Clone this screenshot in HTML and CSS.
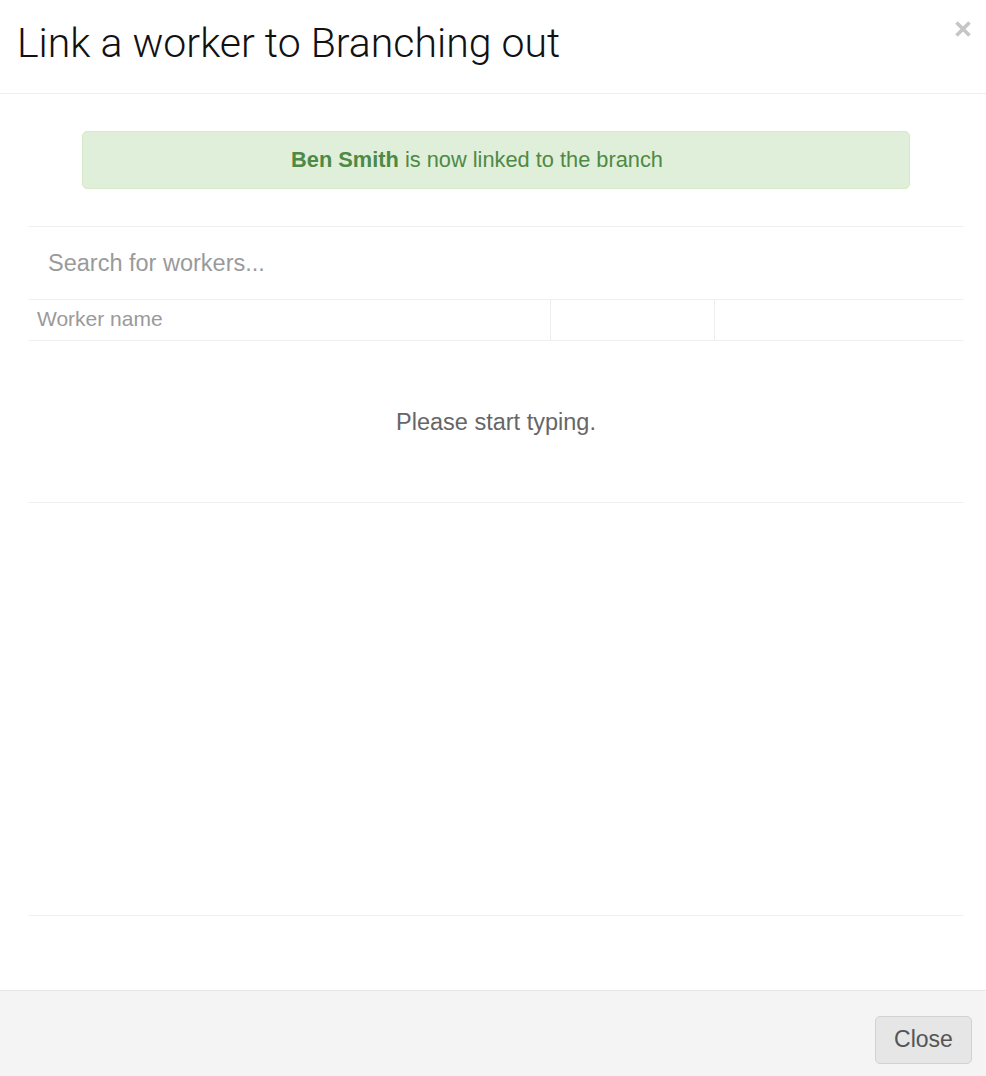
FILE: index.html
```html
<!DOCTYPE html>
<html lang="en">
<head>
    <meta charset="UTF-8">
    <meta name="viewport" content="width=device-width, initial-scale=1.0">
    <title>Link a worker</title>
    <link rel="stylesheet" href="styles.css">
</head>
<body>
    <div class="modal">
        <!-- Intestazione -->
        <div class="modal-header">
            <h1 class="modal-title">Link a worker to Branching out</h1>
            <button class="close" type="button" aria-label="Close">
                <svg width="18" height="18" viewBox="0 0 18 18">
                    <path d="M2.5 2.5 L15.5 15.5 M15.5 2.5 L2.5 15.5" stroke="#c6c6c6" stroke-width="3.6" fill="none"/>
                </svg>
            </button>
        </div>

        <div class="modal-body">
            <div class="alert-success"><strong>Ben Smith</strong> is now linked to the branch</div>

            <div class="search">
                <input type="text" class="search-input" placeholder="Search for workers...">
            </div>

            <table class="workers">
                <thead>
                    <tr>
                        <th class="col-name">Worker name</th>
                        <th class="col-mid"></th>
                        <th class="col-last"></th>
                    </tr>
                </thead>
            </table>

            <div class="empty">Please start typing.</div>

            <!-- Risultati della ricerca -->
            <div class="results"></div>
        </div>

        <div class="modal-footer">
            <button class="btn-close" type="button">Close</button>
        </div>
    </div>
</body>
</html>
```

FILE: styles.css
```css
body {
    margin: 0;
    background-color: #fff;
    font-family: "Liberation Sans", Arial, Helvetica, sans-serif;
    color: #333;
}

.modal {
    width: 986px;
    height: 1076px;
    display: flex;
    flex-direction: column;
}

.modal-header {
    position: relative;
    padding: 20px 17px 26px;
    border-bottom: 1px solid #eeeeee;
}

.modal-title {
    margin: 0;
    font-family: Roboto, "Liberation Sans", sans-serif;
    font-weight: 300;
    font-size: 41px;
    line-height: 47px;
    color: #111;
}

.close {
    position: absolute;
    top: 20px;
    right: 14px;
    width: 18px;
    height: 18px;
    padding: 0;
    border: none;
    background: none;
    cursor: pointer;
}

.close svg {
    display: block;
}

.modal-body {
    flex: 1;
    padding: 37px 22px 0 28px;
}

.alert-success {
    margin: 0 54px 37px;
    padding: 16px 54px 16px 16px;
    border: 1px solid #d6e9c6;
    border-radius: 5px;
    background-color: #e0efd9;
    color: #4f8946;
    font-size: 21.8px;
    line-height: 24px;
    text-align: center;
}

.search {
    border-top: 1px solid #f0f0f0;
}

.search-input {
    display: block;
    width: 100%;
    height: 72px;
    box-sizing: border-box;
    padding: 0 20px;
    border: none;
    outline: none;
    font-family: inherit;
    font-size: 23.5px;
    color: #555;
    background: transparent;
}

.search-input::placeholder {
    color: #9a9a9a;
}

.workers {
    width: 100%;
    border-collapse: collapse;
    table-layout: fixed;
}

.workers th {
    padding: 0 9px 2px;
    height: 38px;
    border-top: 1px solid #f0f0f0;
    border-bottom: 1px solid #f0f0f0;
    font-size: 21px;
    font-weight: normal;
    line-height: 38px;
    text-align: left;
    color: #9a9a9a;
}

.workers .col-name {
    width: 504px;
}

.workers .col-mid {
    width: 145px;
    border-left: 1px solid #eeeeee;
}

.workers .col-last {
    border-left: 1px solid #eeeeee;
}

.empty {
    padding: 67px 0 66px;
    border-bottom: 1px solid #f0f0f0;
    font-size: 23.5px;
    line-height: 28px;
    text-align: center;
    color: #666;
}

.results {
    height: 412px;
    border-bottom: 1px solid #f0f0f0;
}

.modal-footer {
    height: 86px;
    box-sizing: border-box;
    padding: 25px 14px 0 0;
    border-top: 1px solid #e8e8e8;
    background-color: #f4f4f4;
    display: flex;
    justify-content: flex-end;
    align-items: flex-start;
}

.btn-close {
    width: 97px;
    height: 48px;
    padding: 0 0 2px;
    border: 1px solid #d2d2d2;
    border-radius: 5px;
    background-color: #e6e6e6;
    font-family: inherit;
    font-size: 23px;
    color: #555;
    cursor: pointer;
}
```
